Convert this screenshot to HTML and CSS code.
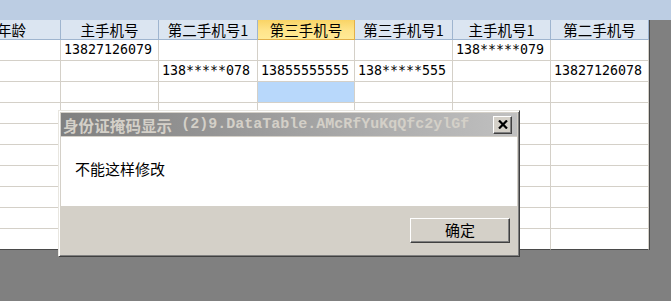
FILE: index.html
```html
<!DOCTYPE html>
<html lang="zh">
<head>
<meta charset="utf-8">
<title>身份证掩码显示</title>
<link rel="stylesheet" href="styles.css">
</head>
<body>
<div class="band"></div>
<div class="grid">
  <div class="row head">
    <div class="c first">年龄</div>
    <div class="c">主手机号</div>
    <div class="c">第二手机号1</div>
    <div class="c sel">第三手机号</div>
    <div class="c">第三手机号1</div>
    <div class="c">主手机号1</div>
    <div class="c">第二手机号</div>
  </div>
  <div class="row">
    <div class="c"></div><div class="c">13827126079</div><div class="c"></div><div class="c"></div><div class="c"></div><div class="c">138*****079</div><div class="c"></div>
  </div>
  <div class="row">
    <div class="c"></div><div class="c"></div><div class="c">138*****078</div><div class="c">13855555555</div><div class="c">138*****555</div><div class="c"></div><div class="c">13827126078</div>
  </div>
  <div class="row">
    <div class="c"></div><div class="c"></div><div class="c"></div><div class="c active"></div><div class="c"></div><div class="c"></div><div class="c"></div>
  </div>
  <div class="row"><div class="c"></div><div class="c"></div><div class="c"></div><div class="c"></div><div class="c"></div><div class="c"></div><div class="c"></div></div>
  <div class="row"><div class="c"></div><div class="c"></div><div class="c"></div><div class="c"></div><div class="c"></div><div class="c"></div><div class="c"></div></div>
  <div class="row"><div class="c"></div><div class="c"></div><div class="c"></div><div class="c"></div><div class="c"></div><div class="c"></div><div class="c"></div></div>
  <div class="row"><div class="c"></div><div class="c"></div><div class="c"></div><div class="c"></div><div class="c"></div><div class="c"></div><div class="c"></div></div>
  <div class="row"><div class="c"></div><div class="c"></div><div class="c"></div><div class="c"></div><div class="c"></div><div class="c"></div><div class="c"></div></div>
  <div class="row"><div class="c"></div><div class="c"></div><div class="c"></div><div class="c"></div><div class="c"></div><div class="c"></div><div class="c"></div></div>
  <div class="row last"><div class="c"></div><div class="c"></div><div class="c"></div><div class="c"></div><div class="c"></div><div class="c"></div><div class="c"></div></div>
</div>

<div class="dialog">
  <div class="titlebar">
    <span class="t-cjk">身份证掩码显示</span><span class="t-lat"> (2)9.DataTable.AMcRfYuKqQfc2ylGf</span>
    <div class="close"><svg width="10" height="9" viewBox="0 0 10 9"><path d="M1 0.5 L9 8.5 M9 0.5 L1 8.5" stroke="#000" stroke-width="2.2" fill="none"/></svg></div>
  </div>
  <div class="msg">不能这样修改</div>
  <div class="foot">
    <div class="btn">确定</div>
  </div>
</div>
</body>
</html>
```

FILE: styles.css
```css
html, body {
  margin: 0;
  padding: 0;
}
body {
  background: #808080;
  width: 671px;
  height: 301px;
  overflow: hidden;
  position: relative;
  font-family: "Noto Sans CJK SC", sans-serif;
  color: #000;
}
.band {
  height: 20px;
  background: #bccde3;
}
.grid {
  width: 650px;
  box-sizing: border-box;
  border-right: 1px solid #4a4a4a;
  background: #fff;
}
.row {
  display: grid;
  grid-template-columns: 61px 98px 99px 97px 98px 98px 98px;
  height: 21px;
}
.c {
  box-sizing: border-box;
  border-right: 1px solid #d4d0c8;
  border-bottom: 1px solid #d4d0c8;
  font-family: "DejaVu Sans Mono", monospace;
  font-size: 13.3px;
  line-height: 20px;
  padding-left: 3px;
  white-space: nowrap;
  overflow: hidden;
}
.row.last .c {
  border-bottom-color: #4a4a4a;
}
.c.active {
  background: #b8d8fb;
}
.head {
  height: 20px;
}
.head .c {
  background: #dbe5f1;
  border-right-color: #9fb5cf;
  border-bottom-color: #9fb5cf;
  font-family: "Noto Sans CJK SC", sans-serif;
  font-size: 14.5px;
  line-height: 19px;
  text-align: center;
  padding-left: 0;
}
.head .c.first {
  text-align: left;
  text-indent: -3px;
}
.head .c.sel {
  background: linear-gradient(#f9d466, #ffe48a 55%, #ffea96);
  border-right-color: #e2b04a;
  border-bottom-color: #e2b04a;
}

.dialog {
  position: absolute;
  left: 58px;
  top: 110px;
  width: 462px;
  height: 147px;
  box-sizing: border-box;
  background: #d4d0c8;
  border: 1px solid;
  border-color: #e8e6e0 #404040 #404040 #e8e6e0;
  box-shadow: inset 1px 1px #fff, inset -1px -1px #808080;
  padding: 2px;
  display: flex;
  flex-direction: column;
}
.titlebar {
  height: 23px;
  margin-bottom: 1px;
  background: linear-gradient(to right, #808080, #c0c0c0);
  display: flex;
  align-items: center;
  padding-left: 2px;
  color: #d4d0c8;
  font-weight: bold;
  white-space: nowrap;
  overflow: hidden;
}
.t-cjk {
  font-family: "Noto Sans CJK SC", sans-serif;
  font-size: 15.5px;
  font-weight: 700;
  letter-spacing: 0.1px;
}
.t-lat {
  font-family: "Liberation Mono", monospace;
  font-size: 15px;
  font-weight: 700;
  white-space: pre;
}
.close {
  margin-left: auto;
  margin-right: 5px;
  width: 19px;
  height: 18px;
  flex: none;
  box-sizing: border-box;
  background: #d4d0c8;
  border: 1px solid;
  border-color: #fff #404040 #404040 #fff;
  box-shadow: inset -1px -1px #808080;
  display: flex;
  align-items: center;
  justify-content: center;
}
.close svg {
  display: block;
}
.msg {
  height: 69px;
  box-sizing: border-box;
  background: #fff;
  padding: 23px 0 0 14px;
  font-size: 15px;
  line-height: 17px;
}
.foot {
  flex: 1;
  display: flex;
  justify-content: flex-end;
  align-items: flex-start;
  padding: 12px 7px 0 0;
}
.btn {
  width: 100px;
  height: 25px;
  box-sizing: border-box;
  border: 1px solid;
  border-color: #fff #404040 #404040 #fff;
  box-shadow: inset -1px -1px #808080;
  background: #d4d0c8;
  font-size: 15px;
  line-height: 22px;
  text-align: center;
}
```
